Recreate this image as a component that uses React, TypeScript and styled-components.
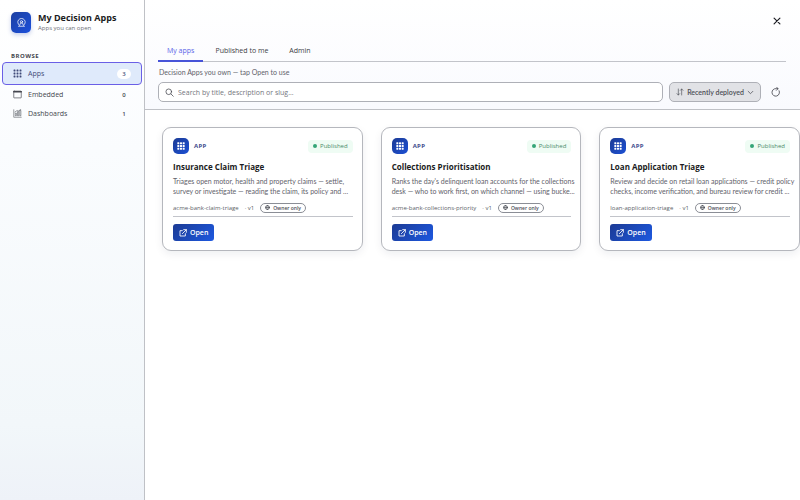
import React from "react";
import styled, { createGlobalStyle } from "styled-components";

const GlobalStyle = createGlobalStyle`
  *, *::before, *::after { box-sizing: border-box; }
  body {
    margin: 0;
    background: #ffffff;
    color: #1b1c22;
    font-family: "Open Sans", "Noto Sans", sans-serif;
    font-size: 7px;
    line-height: 10px;
  }
  h1, h2, p { margin: 0; }
  button, input { font: inherit; color: inherit; }
  button { cursor: pointer; }
`;

const Shell = styled.div`
  display: flex;
  min-height: 100vh;
  overflow: hidden;
`;

const Sidebar = styled.aside`
  flex: none;
  width: 145px;
  border-right: 1px solid #bfc1c6;
  background: linear-gradient(180deg, #ffffff 0%, #fafcfe 30%, #f2f7fa 85%, #eef2f8 100%);
`;

const Brand = styled.header`
  display: flex;
  align-items: center;
  gap: 7px;
  padding: 11px 11px 0;
`;

const Logo = styled.span`
  display: grid;
  place-items: center;
  width: 20px;
  height: 21px;
  border-radius: 5px;
  background: linear-gradient(135deg, #1c3fa0, #1c50dc);
  box-shadow: 0 2px 4px rgba(30, 64, 175, 0.25);
  color: #ffffff;
`;

const BrandName = styled.h1`
  font-size: 9px;
  line-height: 13px;
  font-weight: 700;
  white-space: nowrap;
`;

const BrandNote = styled.p`
  font-size: 6px;
  line-height: 9px;
  color: #6d7078;
`;

const NavHeading = styled.h2`
  padding: 19px 11px 0;
  font-size: 6px;
  line-height: 9px;
  font-weight: 700;
  letter-spacing: 0.5px;
  color: #44464e;
`;

const Nav = styled.nav`
  display: flex;
  flex-direction: column;
  padding: 1px 2px;
`;

const NavItem = styled.button<{ $active?: boolean }>`
  display: flex;
  align-items: center;
  gap: 6px;
  height: ${(p) => (p.$active ? 23 : 19)}px;
  padding: 0 10px;
  border: 1px solid ${(p) => (p.$active ? "#6a5fe6" : "transparent")};
  border-radius: 4px;
  background: ${(p) => (p.$active ? "#dfeafb" : "transparent")};
  color: ${(p) => (p.$active ? "#3f4a78" : "#44464e")};
  font-weight: 500;
  text-align: left;
`;

const Count = styled.span<{ $active?: boolean }>`
  width: 14px;
  margin-left: auto;
  border-radius: 6px;
  background: ${(p) => (p.$active ? "#ffffff" : "transparent")};
  font-size: 6px;
  font-weight: 600;
  text-align: center;
`;

const Main = styled.main`
  flex: 1;
  min-width: 0;
`;

const Top = styled.header`
  display: flex;
  flex-direction: column;
  padding: 15px 14px 7px 13px;
  border-bottom: 1px solid #bfc1c6;
  background: linear-gradient(180deg, #ffffff, #f9fafe);
`;

const IconButton = styled.button`
  display: grid;
  place-items: center;
  flex: none;
  width: 12px;
  height: 12px;
  padding: 0;
  border: 0;
  background: none;
  color: #44464e;
`;

const CloseButton = styled(IconButton)`
  align-self: flex-end;
  margin-right: 3px;
  color: #1b1c22;
`;

const Tabs = styled.div`
  display: flex;
  gap: 3px;
  margin-top: 13px;
  border-bottom: 1px solid #c2c4ca;
`;

const Tab = styled.button<{ $active?: boolean }>`
  height: 22px;
  margin-bottom: -1px;
  padding: 2px 9px 0;
  border: 0;
  border-bottom: 2px solid ${(p) => (p.$active ? "#4653d8" : "transparent")};
  background: none;
  color: ${(p) => (p.$active ? "#5965e8" : "#3c3e46")};
  font-weight: 500;
`;

const Hint = styled.p`
  padding: 5px 1px;
  color: #5f626b;
  font-family: Lato, sans-serif;
`;

const Filters = styled.div`
  display: flex;
  align-items: center;
  gap: 6px;
`;

const Search = styled.label`
  display: flex;
  flex: 1;
  align-items: center;
  gap: 4px;
  height: 20px;
  padding: 0 6px;
  border: 1px solid #aeb0b7;
  border-radius: 5px;
  background: #ffffff;
  color: #44464e;
`;

const SearchInput = styled.input`
  flex: 1;
  min-width: 0;
  padding: 1px 0 0;
  border: 0;
  outline: 0;
  background: none;
  &::placeholder { color: #74767e; opacity: 1; }
`;

const SortButton = styled.button`
  display: flex;
  align-items: center;
  justify-content: space-between;
  width: 92px;
  height: 20px;
  padding: 0 6px;
  border: 1px solid #aeb0b7;
  border-radius: 5px;
  background: #e1e2e6;
  color: #4c4e56;
  font-family: Lato, sans-serif;
  font-weight: 600;
  white-space: nowrap;
`;

const RefreshButton = styled(IconButton)`
  margin: 0 4px 0 3px;
`;

const Cards = styled.section`
  display: grid;
  grid-template-columns: repeat(3, minmax(0, 1fr));
  gap: 18px;
  padding: 17px 0 18px 17px;
`;

const Card = styled.article`
  display: flex;
  flex-direction: column;
  padding: 10px 9px 9px 10px;
  border: 1px solid #b5b7bd;
  border-radius: 9px;
  background: #ffffff;
  box-shadow: 0 3px 9px rgba(20, 30, 60, 0.07);
`;

const CardHead = styled.div`
  display: flex;
  align-items: center;
  gap: 5px;
`;

const AppIcon = styled.span`
  display: grid;
  place-items: center;
  width: 16px;
  height: 16px;
  border-radius: 5px;
  background: linear-gradient(135deg, #1c3b94, #1c50d4);
  color: #ffffff;
`;

const Kind = styled.span`
  font-size: 6px;
  font-weight: 700;
  letter-spacing: 0.3px;
  color: #3d4a8c;
`;

const Status = styled.span`
  display: flex;
  align-items: center;
  gap: 3px;
  height: 13px;
  margin-left: auto;
  padding: 0 5px;
  border-radius: 4px;
  background: #effcf4;
  color: #4a8a68;
  font-size: 6px;
  font-weight: 500;
  &::before {
    content: "";
    width: 4px;
    height: 4px;
    border-radius: 50%;
    background: #35a577;
  }
`;

const CardTitle = styled.h2`
  margin-top: 7px;
  font-size: 8px;
  line-height: 12px;
  font-weight: 700;
`;

const Description = styled.p`
  margin-top: 3px;
  color: #5f626b;
  font-family: Lato, sans-serif;
  font-size: 7px;
  white-space: nowrap;
`;

const Meta = styled.div`
  display: flex;
  align-items: center;
  gap: 6px;
  height: 21px;
  padding-top: 3px;
  border-bottom: 1px solid #c2c4ca;
  color: #5c5f68;
  font-size: 6px;
  white-space: nowrap;
`;

const Owner = styled.span`
  display: flex;
  align-items: center;
  gap: 3px;
  height: 10px;
  padding: 0 4px;
  border: 1px solid #8b8e96;
  border-radius: 5px;
  color: #4c4e56;
  font-size: 5px;
  font-weight: 600;
`;

const OpenButton = styled.button`
  display: flex;
  align-items: center;
  align-self: flex-start;
  gap: 3px;
  height: 17px;
  margin-top: 7px;
  padding: 0 6px;
  border: 0;
  border-radius: 3px;
  background: linear-gradient(135deg, #1c3b94, #1d58e0);
  color: #ffffff;
  font-weight: 600;
`;

const Stroke = ({ size, width = 2, children }: { size: number; width?: number; children: React.ReactNode }) => (
  <svg width={size} height={size} viewBox="0 0 24 24" fill="none" stroke="currentColor" strokeWidth={width} strokeLinecap="round" strokeLinejoin="round" aria-hidden="true">
    {children}
  </svg>
);

const DotGrid = ({ size, dot }: { size: number; dot: number }) => (
  <svg width={size} height={size} viewBox="0 0 24 24" fill="currentColor" aria-hidden="true">
    {[4, 12, 20].flatMap((y) =>
      [4, 12, 20].map((x) => <rect key={`${x}-${y}`} x={x - dot / 2} y={y - dot / 2} width={dot} height={dot} rx="1" />),
    )}
  </svg>
);

const WindowIcon = () => (
  <Stroke size={9} width={1.8}>
    <rect x="2" y="3" width="20" height="18" rx="1" />
    <path d="M2 4.5h20" strokeWidth="4" />
  </Stroke>
);

const ChartIcon = () => (
  <Stroke size={9} width={1.4}>
    <path d="M2 2v20h20M6 12v6h3v-6zM12 8v10h3V8zM18 5v13h3V5zM5 8l6-4 4 1 6-4" />
  </Stroke>
);

const apps = [
  {
    title: "Insurance Claim Triage",
    lines: ["Triages open motor, health and property claims — settle,", "survey or investigate — reading the claim, its policy and ..."],
    slug: "acme-bank-claim-triage",
  },
  {
    title: "Collections Prioritisation",
    lines: ["Ranks the day's delinquent loan accounts for the collections", "desk — who to work first, on which channel — using bucke..."],
    slug: "acme-bank-collections-priority",
  },
  {
    title: "Loan Application Triage",
    lines: ["Review and decide on retail loan applications — credit policy", "checks, income verification, and bureau review for credit ..."],
    slug: "loan-application-triage",
  },
];

export default function App() {
  return (
    <>
      <GlobalStyle />
      <Shell>
        <Sidebar>
          <Brand>
            <Logo>
              <Stroke size={9} width={2}>
                <path d="M7 20a10 10 0 1 1 10 0M4 22h16" />
                <circle cx="12" cy="10" r="3" />
                <path d="M8 18v-1a4 4 0 0 1 8 0v1" />
              </Stroke>
            </Logo>
            <div>
              <BrandName>My Decision Apps</BrandName>
              <BrandNote>Apps you can open</BrandNote>
            </div>
          </Brand>
          <NavHeading>BROWSE</NavHeading>
          <Nav>
            <NavItem $active aria-current="page">
              <DotGrid size={9} dot={5} />
              Apps
              <Count $active>3</Count>
            </NavItem>
            <NavItem>
              <WindowIcon />
              Embedded
              <Count>0</Count>
            </NavItem>
            <NavItem>
              <ChartIcon />
              Dashboards
              <Count>1</Count>
            </NavItem>
          </Nav>
        </Sidebar>
        <Main>
          <Top>
            <CloseButton aria-label="Close">
              <Stroke size={10} width={2.8}>
                <path d="M5 5l14 14M19 5L5 19" />
              </Stroke>
            </CloseButton>
            <Tabs role="tablist">
              <Tab role="tab" aria-selected="true" $active>My apps</Tab>
              <Tab role="tab" aria-selected="false">Published to me</Tab>
              <Tab role="tab" aria-selected="false">Admin</Tab>
            </Tabs>
            <Hint>Decision Apps you own — tap Open to use</Hint>
            <Filters>
              <Search>
                <Stroke size={9}>
                  <circle cx="10" cy="10" r="7.5" />
                  <path d="M16 16l6 6" />
                </Stroke>
                <SearchInput type="search" aria-label="Search apps" placeholder="Search by title, description or slug..." />
              </Search>
              <SortButton>
                <Stroke size={8}>
                  <path d="M7 3v18M3 17l4 4 4-4M17 21V3M13 7l4-4 4 4" />
                </Stroke>
                Recently deployed
                <Stroke size={7} width={2.6}>
                  <path d="M4 8l8 8 8-8" />
                </Stroke>
              </SortButton>
              <RefreshButton aria-label="Refresh">
                <Stroke size={10}>
                  <path d="M19.5 9a9 9 0 1 1-7-5h4M13 0l4 4-4 4" />
                </Stroke>
              </RefreshButton>
            </Filters>
          </Top>
          <Cards>
            {apps.map((app) => (
              <Card key={app.slug}>
                <CardHead>
                  <AppIcon><DotGrid size={8} dot={6} /></AppIcon>
                  <Kind>APP</Kind>
                  <Status>Published</Status>
                </CardHead>
                <CardTitle>{app.title}</CardTitle>
                <Description>
                  {app.lines[0]}
                  <br />
                  {app.lines[1]}
                </Description>
                <Meta>
                  <span>{app.slug}</span>
                  <span>· v1</span>
                  <Owner>
                    <Stroke size={5} width={3}>
                      <circle cx="12" cy="12" r="10" />
                      <path d="M2 12h20M12 2c-6 6-6 14 0 20M12 2c6 6 6 14 0 20" />
                    </Stroke>
                    Owner only
                  </Owner>
                </Meta>
                <OpenButton>
                  <Stroke size={8} width={2.6}>
                    <path d="M10 5H3v16h16v-7M14 2h8v8M22 2L10 14" />
                  </Stroke>
                  Open
                </OpenButton>
              </Card>
            ))}
          </Cards>
        </Main>
      </Shell>
    </>
  );
}
